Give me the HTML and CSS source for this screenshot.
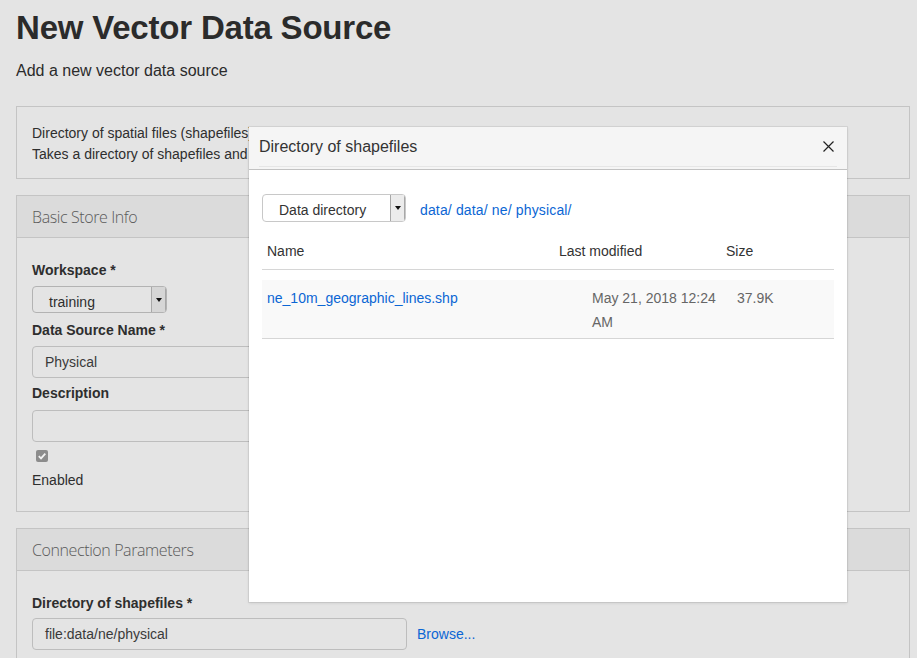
FILE: index.html
```html
<!DOCTYPE html>
<html>
<head>
<meta charset="utf-8">
<link rel="stylesheet" href="styles.css">
</head>
<body>
<div class="page">
  <h1 class="title">New Vector Data Source</h1>
  <p class="subtitle">Add a new vector data source</p>

  <div class="panel panel-info">
    <div class="info-clip">
      <div class="info-text">Directory of spatial files (shapefiles)</div>
      <div class="info-text">Takes a directory of shapefiles and exposes it as a data store</div>
    </div>
  </div>

  <div class="panel">
    <div class="panel-heading">Basic Store Info</div>
    <div class="panel-body body-basic">
      <div class="label lbl-ws">Workspace *</div>
      <div class="select select-ws">
        <span class="select-text">training</span>
        <span class="select-arrow"><span class="tri"></span></span>
      </div>
      <div class="label lbl-gap">Data Source Name *</div>
      <div class="input">Physical</div>
      <div class="label lbl-gap2">Description</div>
      <div class="input"></div>
      <div class="checkbox">
        <svg width="12" height="12" viewBox="0 0 12 12"><rect x="0" y="0" width="12" height="12" rx="2" fill="#8c8c8c"/><path d="M2.8 6.2 L5 8.4 L9.3 3.6" fill="none" stroke="#f2f2f2" stroke-width="1.8"/></svg>
      </div>
      <div class="plain">Enabled</div>
    </div>
  </div>

  <div class="panel">
    <div class="panel-heading">Connection Parameters</div>
    <div class="panel-body body-conn">
      <div class="label lbl-dir">Directory of shapefiles *</div>
      <div class="row-browse">
        <div class="input input-dir">file:data/ne/physical</div>
        <a class="link browse">Browse...</a>
      </div>
    </div>
  </div>
</div>

<div class="modal">
  <div class="modal-header">
    <div class="modal-header-inner">
      <span class="modal-title">Directory of shapefiles</span>
      <svg class="close" width="11" height="11" viewBox="0 0 11 11"><path d="M0.5 0.5 L10.5 10.5 M10.5 0.5 L0.5 10.5" stroke="#222" stroke-width="1.2"/></svg>
    </div>
  </div>
  <div class="modal-body">
    <div class="toolbar">
      <div class="select select-dir">
        <span class="select-text">Data directory</span>
        <span class="select-arrow"><span class="tri"></span></span>
      </div>
      <span class="crumbs link">data/ data/ ne/ physical/</span>
    </div>
    <div class="thead">
      <span class="th th-name">Name</span>
      <span class="th th-mod">Last modified</span>
      <span class="th th-size">Size</span>
    </div>
    <div class="trow">
      <span class="td td-name link">ne_10m_geographic_lines.shp</span>
      <span class="td td-mod">May 21, 2018 12:24 AM</span>
      <span class="td td-size">37.9K</span>
    </div>
  </div>
</div>
</body>
</html>
```

FILE: styles.css
```css
html, body {
  margin: 0;
  padding: 0;
  background: #e4e4e4;
  font-family: "Liberation Sans", Arial, sans-serif;
  color: #2e2e2e;
  font-size: 14px;
  overflow: hidden;
  height: 658px;
}

.page {
  padding: 0 7px 0 16px;
}

.title {
  margin: 0;
  padding-top: 10px;
  font-size: 33px;
  line-height: 36px;
  font-weight: bold;
  color: #2b2b2b;
  letter-spacing: -0.2px;
}

.subtitle {
  margin: 15px 0 0;
  font-size: 16px;
  line-height: 20px;
  color: #2b2b2b;
}

.panel {
  border: 1px solid #c4c4c4;
  margin-top: 16px;
  background: #e4e4e4;
}

.panel-info {
  margin-top: 25px;
  padding: 16px 15px 13px;
}

.info-clip {
  width: 217px;
  overflow: hidden;
}

.info-text {
  line-height: 21px;
  font-size: 14px;
  color: #2e2e2e;
  white-space: nowrap;
}

.panel-heading {
  background: #dbdbdb;
  border-bottom: 1px solid #c4c4c4;
  height: 41px;
  line-height: 42px;
  padding: 0 15px;
  font-family: "Open Sans", "Liberation Sans", sans-serif;
  font-weight: 300;
  font-size: 16px;
  color: #5a5a5a;
  letter-spacing: -0.4px;
}

.panel-body {
  padding: 22px 15px 22px;
}

.body-basic {
  padding-bottom: 21px;
}

.body-conn {
  padding-top: 22px;
}

.label {
  font-weight: bold;
  font-size: 14px;
  line-height: 20px;
  color: #2e2e2e;
  margin-bottom: 7px;
}

.lbl-ws { margin-bottom: 6px; }
.lbl-gap { margin-top: 7px; margin-bottom: 6px; }
.lbl-gap2 { margin-top: 5px; margin-bottom: 7px; }
.lbl-dir { margin-bottom: 5px; }

.plain {
  line-height: 20px;
  margin-top: 8px;
}

.select {
  display: flex;
  align-items: stretch;
  border: 1px solid #b3b3b3;
  border-radius: 4px;
  box-sizing: border-box;
  overflow: hidden;
}

.select-ws {
  width: 135px;
  height: 27px;
  background: #e4e4e4;
}

.select-text {
  flex: 1;
  padding-left: 16px;
  line-height: 30px;
  height: 25px;
  overflow: hidden;
  color: #2e2e2e;
}

.select-arrow {
  width: 13px;
  border-left: 1px solid #a8a8a8;
  border-right: 1px solid #a8a8a8;
  background: #d6d6d6;
  display: flex;
  align-items: center;
  justify-content: center;
}

.tri {
  width: 0;
  height: 0;
  border-left: 3px solid transparent;
  border-right: 3px solid transparent;
  border-top: 4px solid #111;
}

.input {
  width: 375px;
  height: 32px;
  box-sizing: border-box;
  border: 1px solid #bdbdbd;
  border-radius: 4px;
  padding-left: 12px;
  line-height: 30px;
  color: #3a3a3a;
  background: #e4e4e4;
}

.checkbox {
  margin-top: 8px;
  padding-left: 4px;
  height: 12px;
}
.checkbox svg { display: block; }

.row-browse {
  display: flex;
  align-items: center;
  gap: 10px;
}

.input-dir {
  width: 375px;
}

.link {
  color: #0b66d4;
}

.browse {
  font-size: 14px;
}

/* modal */
.modal {
  position: absolute;
  left: 249px;
  top: 127px;
  width: 598px;
  height: 475px;
  background: #fff;
  box-shadow: 0 0 0 1px rgba(0,0,0,0.06), 0 1px 3px rgba(0,0,0,0.12);
}

.modal-header {
  background: #f5f5f5;
  padding: 0 10px 2px;
  border-bottom: 1px solid #c2c2c2;
}

.modal-header-inner {
  height: 39px;
  border-bottom: 1px solid #e6e6e6;
  display: flex;
  align-items: center;
  justify-content: space-between;
}

.modal-title {
  font-size: 16px;
  color: #333;
  line-height: 40px;
  padding-top: 1px;
}

.close {
  margin-right: 3px;
  display: block;
}

.modal-body {
  padding: 24px 13px 0;
}

.toolbar {
  display: flex;
  align-items: center;
  gap: 14px;
}

.select-dir {
  width: 144px;
  height: 28px;
  background: #fff;
  border-color: #c8c8c8;
}
.select-dir .select-text { color: #333; line-height: 31px; height: 26px; }
.select-dir .select-arrow { background: #ececec; border-color: #a8a8a8; }

.crumbs {
  font-size: 14px;
  padding-top: 3px;
  letter-spacing: 0.15px;
}

.thead {
  display: grid;
  grid-template-columns: 292px 167px 1fr;
  margin-top: 19px;
  border-bottom: 1px solid #d6d6d6;
  padding-bottom: 8px;
}

.th {
  line-height: 20px;
  color: #333;
  padding-left: 5px;
}

.trow {
  margin-top: 10px;
  display: grid;
  grid-template-columns: 325px 145px 1fr;
  background: #f9f9f9;
  border-bottom: 1px solid #d6d6d6;
  padding: 6px 0 4px;
}

.td {
  line-height: 24px;
  padding-left: 5px;
}

.td-mod, .td-size {
  color: #666;
}
.td-mod { padding-right: 8px; }
```
